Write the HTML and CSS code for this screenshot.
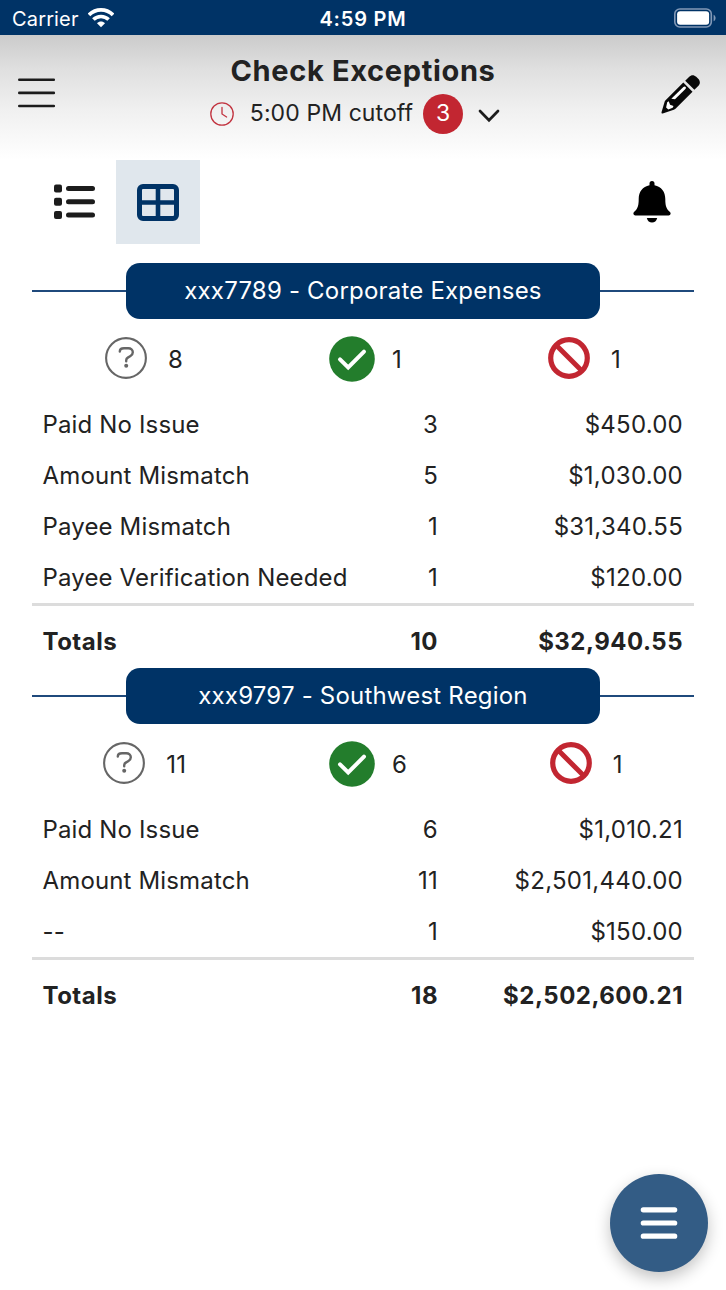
FILE: index.html
```html
<!DOCTYPE html>
<html lang="en">
<head>
    <meta charset="UTF-8">
    <meta name="viewport" content="width=device-width, initial-scale=1.0">
    <title>Check Exceptions</title>
    <link rel="stylesheet" href="styles.css">
</head>
<body>
    <!-- shared icons -->
    <svg class="icon-defs" width="0" height="0">
        <symbol id="icon-question" viewBox="0 0 42 42">
            <circle cx="21" cy="21" r="19.9" fill="none" stroke="#666" stroke-width="2.1"/>
            <path d="M14.8 14.5C14.8 12.3 16.6 11.3 19 11.3h4.3c2.6 0 4.5 1.6 4.5 4 0 1.7-.9 2.9-2.3 3.7l-2.7 1.6c-1 .6-1.6 1.5-1.6 2.6v1.100" fill="none" stroke="#666" stroke-width="2.4" stroke-linecap="round"/>
            <circle cx="21.2" cy="28.8" r="2" fill="#666"/>
        </symbol>
        <symbol id="icon-check" viewBox="0 0 46 46">
            <circle cx="23" cy="23" r="22.8" fill="#237d2c"/>
            <path d="M11 23.3l8.200 8.200L35 15.600" fill="none" stroke="#fff" stroke-width="4" stroke-linecap="round"/>
        </symbol>
        <symbol id="icon-ban" viewBox="0 0 42 42">
            <circle cx="21" cy="21" r="18.3" fill="none" stroke="#c22631" stroke-width="5.2"/>
            <path d="M8.5 8.5l25 25" fill="none" stroke="#c22631" stroke-width="5"/>
        </symbol>
    </svg>

    <div class="status-bar">
        <div class="carrier">
            Carrier
            <svg width="26" height="20" viewBox="0 0 26 20" fill="none" stroke="#fff" stroke-width="3.6">
                <path d="M1 6.9C7.700.2 18.300.2 25 6.900"/>
                <path d="M5.400 11.600c4.200-4.200 11-4.200 15.200 0"/>
                <path d="M13 19.300l-4-4.100c2.200-2.200 5.800-2.200 8 0z" fill="#fff" stroke="none"/>
            </svg>
        </div>
        <div class="time">4:59 PM</div>
        <div class="battery">
            <svg width="43" height="20" viewBox="0 0 43 20">
                <rect x=".8" y="1" width="36.500" height="18" rx="5" fill="none" stroke="#8299b7" stroke-width="1.600"/>
                <rect x="3.100" y="3.300" width="32" height="13.400" rx="3" fill="#fff"/>
                <path d="M39.600 6.700c2.600 1.300 2.600 5.300 0 6.600z" fill="#8299b7"/>
            </svg>
        </div>
    </div>

    <header class="header">
        <svg class="menu" width="38" height="30" viewBox="0 0 38 30" stroke="#1c1c1c" stroke-width="2.6" stroke-linecap="round">
            <path d="M1.300 1.700h34.500M1.300 14.900h34.500M1.300 28h34.500"/>
        </svg>
        <div class="heading">
            <h1>Check Exceptions</h1>
            <div class="cutoff">
                <svg width="24" height="24" viewBox="0 0 24 24" fill="none" stroke="#c23440" stroke-width="1.3" stroke-linecap="round">
                    <circle cx="12" cy="12" r="11.200"/>
                    <path d="M12 5.500V12l4.600 3"/>
                </svg>
                <span class="cutoff-time">5:00 PM cutoff</span>
                <span class="badge">3</span>
                <svg class="chevron" width="22" height="14" viewBox="0 0 22 14" fill="none" stroke="#1c1c1c" stroke-width="2.7" stroke-linecap="round">
                    <path d="M2 2l9 9.200L20 2"/>
                </svg>
            </div>
        </div>
        <svg class="pencil" width="39" height="39" viewBox="0 0 39 39">
            <path d="M22.300 7.600L31.500 16.700 14.500 33.700Q13.800 34.400 12.800 34.800L1.700 38.500Q.200 38.800.500 37.300L3.700 26.600Q4 25.600 4.800 24.900z" fill="#080808"/>
            <path d="M24.200 5.700l3.800-3.800c2.400-2.400 5-2.300 7.200-.100l2 2c2.200 2.200 2.200 5 0 7.200l-3.800 3.800z" fill="#080808"/>
            <path d="M10.300 23.700L22.400 12.100q1.300-1 2.300 0 .700.900-.300 2L14 24.200z" fill="#fff"/>
            <path d="M6.200 27.300l1.500-1 1.400 3.500 3.400 1.200-.800 1.700-4.400 1.700-2.200-2z" fill="#fff"/>
        </svg>
    </header>

    <div class="toolbar">
        <div class="view-btn">
            <svg class="list-icon" width="42" height="36" viewBox="0 0 42 36" fill="#1c1c1c">
                <rect x="0" y=".5" width="8" height="8" rx="2"/>
                <rect x="0" y="13.700" width="8" height="8" rx="2"/>
                <rect x="0" y="26.900" width="8" height="8" rx="2"/>
                <rect x="12" y="2" width="29" height="5" rx="2.500"/>
                <rect x="12" y="15.200" width="29" height="5" rx="2.500"/>
                <rect x="12" y="28.400" width="29" height="5" rx="2.500"/>
            </svg>
        </div>
        <div class="view-btn active">
            <svg width="42" height="37" viewBox="0 0 42 37" fill="none" stroke="#003366">
                <rect x="2.500" y="2.500" width="37" height="32" rx="3.500" stroke-width="5"/>
                <path d="M21 3v31M3 18.500h36" stroke-width="4.600"/>
            </svg>
        </div>
        <svg class="bell" width="38" height="42" viewBox="0 0 38 42" fill="#000">
            <path d="M16.500 4.300V2.500a2.500 2.500 0 0 1 5 0v1.800C28.400 5.500 32.300 11 32.300 18c0 6 .700 9.700 4.700 13 1.300 1.300.400 3.400-1.400 3.400H2.400C.600 34.400-.300 32.300 1 31c4-3.300 4.700-7 4.700-13C5.700 11 9.600 5.500 16.500 4.300z"/>
            <path d="M13.800 37h10.400c-.700 3-2.700 4.600-5.200 4.600s-4.500-1.600-5.200-4.600z"/>
        </svg>
    </div>

    <div class="accounts">
        <section class="account">
            <h2 class="account-name"><span>xxx7789 - Corporate Expenses</span></h2>
            <div class="counts">
                <div class="count"><svg width="42" height="42"><use href="#icon-question"/></svg>8</div>
                <div class="count approved"><svg width="46" height="46"><use href="#icon-check"/></svg>1</div>
                <div class="count"><svg width="42" height="42"><use href="#icon-ban"/></svg>1</div>
            </div>
            <div class="rows">
                <div class="row"><span>Paid No Issue</span><span>3</span><span>$450.00</span></div>
                <div class="row"><span>Amount Mismatch</span><span>5</span><span>$1,030.00</span></div>
                <div class="row"><span>Payee Mismatch</span><span>1</span><span>$31,340.55</span></div>
                <div class="row"><span>Payee Verification Needed</span><span>1</span><span>$120.00</span></div>
                <div class="row totals"><span>Totals</span><span>10</span><span>$32,940.55</span></div>
            </div>
        </section>

        <section class="account">
            <h2 class="account-name"><span>xxx9797 - Southwest Region</span></h2>
            <div class="counts">
                <div class="count"><svg width="42" height="42"><use href="#icon-question"/></svg>11</div>
                <div class="count approved"><svg width="46" height="46"><use href="#icon-check"/></svg>6</div>
                <div class="count"><svg width="42" height="42"><use href="#icon-ban"/></svg>1</div>
            </div>
            <div class="rows">
                <div class="row"><span>Paid No Issue</span><span>6</span><span>$1,010.21</span></div>
                <div class="row"><span>Amount Mismatch</span><span>11</span><span>$2,501,440.00</span></div>
                <div class="row"><span>--</span><span>1</span><span>$150.00</span></div>
                <div class="row totals"><span>Totals</span><span>18</span><span>$2,502,600.21</span></div>
            </div>
        </section>
    </div>

    <button class="fab" aria-label="Actions">
        <svg width="38" height="34" viewBox="0 0 38 34" stroke="#fff" stroke-width="5.2" stroke-linecap="round">
            <path d="M3.300 3.800h31.400M3.300 17h31.400M3.300 30.200h31.400"/>
        </svg>
    </button>
</body>
</html>
```

FILE: styles.css
```css
* {
    box-sizing: border-box;
}
body {
    margin: 0;
    height: 1290px;
    background: #fff;
    color: #222;
    font-family: Inter, "Liberation Sans", sans-serif;
    font-size: 24px;
    letter-spacing: 0.15px;
    overflow: hidden;
}
svg {
    display: block;
    flex: none;
}
.icon-defs {
    position: absolute;
}

/* status bar */
.status-bar {
    display: grid;
    grid-template-columns: 1fr auto 1fr;
    align-items: center;
    height: 35px;
    padding: 2px 12px 0;
    background: #003366;
    color: #fff;
    font-size: 20px;
}
.carrier {
    display: flex;
    align-items: center;
    gap: 9px;
}
.carrier svg {
    margin-top: -2px;
}
.time {
    font-weight: 600;
    letter-spacing: 0.8px;
}
.battery {
    justify-self: end;
    margin: -2px -3px 0 0;
}

/* header */
.header {
    display: grid;
    grid-template-columns: 1fr auto 1fr;
    align-items: start;
    height: 125px;
    padding: 0 17px;
    background: linear-gradient(#cbcbcb, #e0e0e0 28%, #f0f0f0 60%, #fff);
}
.menu {
    margin: 43px 0 0 1px;
}
.heading {
    display: flex;
    flex-direction: column;
    align-items: center;
    padding-top: 18px;
}
h1 {
    margin: 0;
    font-size: 29px;
    line-height: 36px;
    font-weight: 700;
    letter-spacing: 0.65px;
}
.cutoff {
    display: flex;
    align-items: center;
    margin: 5px 16px 0 0;
    height: 40px;
}
.cutoff-time {
    margin: -2px 10px 0 16px;
    font-size: 23px;
    letter-spacing: 0.1px;
}
.badge {
    width: 40px;
    height: 40px;
    border-radius: 50%;
    background: #c22631;
    color: #fff;
    font-size: 23px;
    line-height: 38px;
    text-align: center;
}
.chevron {
    margin: 4px 0 0 15px;
}
.pencil {
    justify-self: end;
    margin: 40px 9px 0 0;
}

/* view switcher */
.toolbar {
    display: flex;
    align-items: center;
    height: 84px;
    padding: 0 55px 0 32px;
}
.view-btn {
    display: flex;
    align-items: center;
    justify-content: center;
    width: 84px;
    height: 84px;
}
.view-btn.active {
    background: #e0e7ed;
}
.list-icon {
    margin-left: 2px;
}
.bell {
    margin-left: auto;
}

/* accounts */
.accounts {
    padding: 19px 32px 0;
}
.account-name {
    display: flex;
    align-items: center;
    margin: 0;
    font-size: 24px;
    font-weight: 400;
    letter-spacing: 0.2px;
}
.account-name::before,
.account-name::after {
    content: "";
    flex: 1;
    height: 2px;
    background: #1f4a7c;
}
.account-name span {
    width: 474px;
    height: 56px;
    border-radius: 14px;
    background: #003366;
    color: #fff;
    line-height: 56px;
    text-align: center;
}
.counts {
    display: flex;
    justify-content: space-around;
    align-items: center;
    height: 80px;
}
.count {
    display: flex;
    align-items: center;
    gap: 21px;
}
.count svg {
    margin-top: -3px;
}
.count.approved {
    gap: 17px;
}
.count.approved svg {
    margin-top: 0;
}
.row {
    display: grid;
    grid-template-columns: 1fr 60px 245px;
    height: 51px;
    padding: 0 11px 0 10.5px;
    line-height: 51px;
}
.row span:nth-child(n+2) {
    text-align: right;
    letter-spacing: 0.25px;
}
.row.totals {
    height: 65px;
    padding-top: 10px;
    border-top: 3px solid #dcdcdc;
    font-weight: 700;
    letter-spacing: 0.5px;
}
.row.totals span:nth-child(n+2) {
    letter-spacing: 0.5px;
}

/* floating action button */
.fab {
    position: fixed;
    right: 18px;
    bottom: 18px;
    display: flex;
    align-items: center;
    justify-content: center;
    width: 98px;
    height: 98px;
    padding: 0;
    border: none;
    border-radius: 50%;
    background: #335c85;
    box-shadow: 0 6px 16px rgba(0, 0, 0, 0.24);
}
```
